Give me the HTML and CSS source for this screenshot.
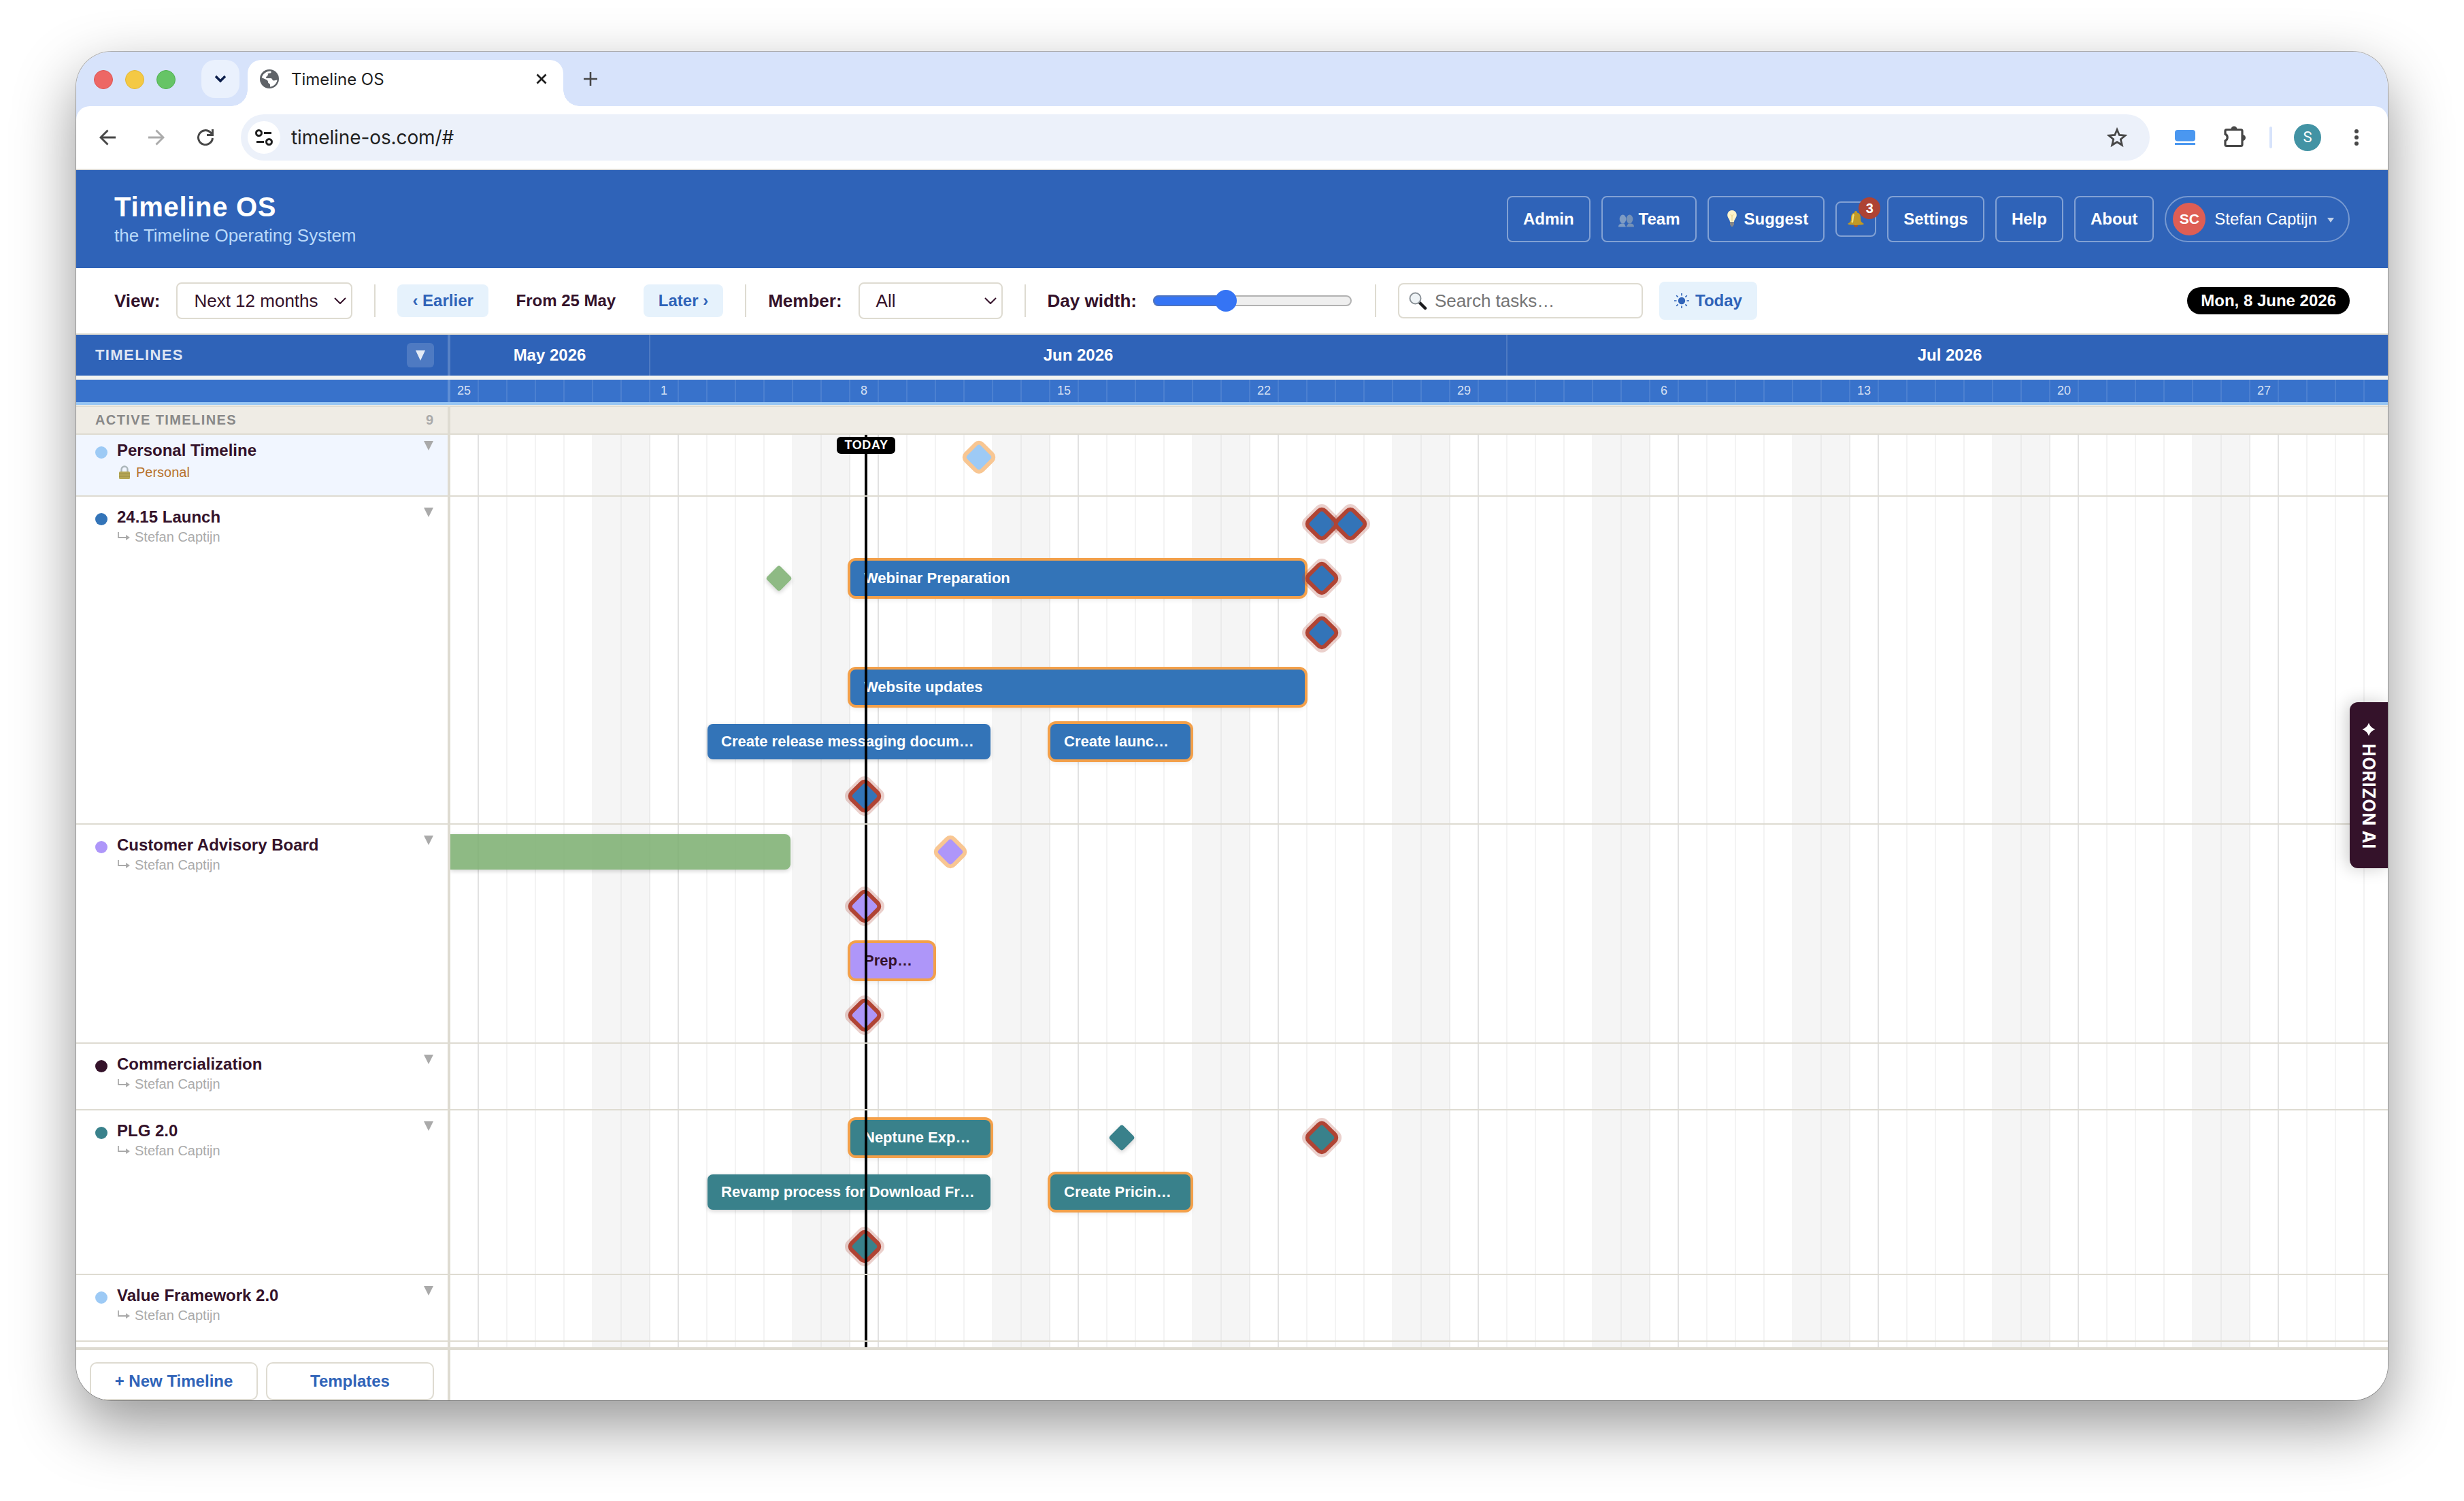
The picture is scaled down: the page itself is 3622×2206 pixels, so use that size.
FILE: index.html
```html
<!DOCTYPE html>
<html lang="en">
  <head>
    <meta charset="UTF-8" />
    <title>Timeline OS</title>
    <link rel="stylesheet" href="styles.css">
  </head>
  <body>
    <!-- Shared icons -->
    <svg width="0" height="0" class="defs">
      <symbol id="chevron" viewBox="0 0 18 10">
        <path d="M1 1l8 8 8-8" fill="none" stroke="currentColor" stroke-width="2" />
      </symbol>
      <symbol id="triangle" viewBox="0 0 14 14">
        <path d="M0 0h14L7 14z" fill="currentColor" />
      </symbol>
      <symbol id="owner" viewBox="0 0 18 14">
        <path d="M1 0v8h13" fill="none" stroke="currentColor" stroke-width="1.8" />
        <path d="M12 4l6 4-6 4z" fill="currentColor" />
      </symbol>
    </svg>

    <div class="window">
      <div class="tabstrip">
        <div class="lights">
          <span class="light red"></span>
          <span class="light yellow"></span>
          <span class="light green"></span>
        </div>
        <div class="tab-search">
          <svg width="18" height="12" viewBox="0 0 18 12"><path d="M2 2l7 7 7-7" fill="none" stroke="#0b1d4a" stroke-width="3.4" /></svg>
        </div>
        <div class="tab">
          <svg width="28" height="28" viewBox="0 0 28 28">
            <circle cx="14" cy="14" r="14" fill="#5f6368" />
            <path d="M16 2.500c2 2-1 4-3 4.500-2 .6-1 3-3 3.500-2 .4-1 2.500 1 2.500h5c2.500 0 2 3.500 4.500 3.500 2 0 3-1 5-1-.5 5-5 9.500-10.500 10v-3c0-2-3-1.500-3-4 0-3-3-3.500-5-4.500L2.800 12C4 7 9 2.600 16 2.500z" fill="#fff" />
            <path d="M12 7.500c2-2 5-1 6 1s-2 3-4 3.500" fill="none" stroke="#5f6368" stroke-width="2" />
          </svg>
          <span class="tab-title">Timeline OS</span>
          <svg width="16" height="16" viewBox="0 0 16 16"><path d="M1.500 1.500l13 13M14.500 1.500l-13 13" stroke="#1f1f1f" stroke-width="2.8" /></svg>
        </div>
        <svg class="new-tab" width="20" height="20" viewBox="0 0 20 20"><path d="M10 0v20M0 10h20" stroke="#474747" stroke-width="2.6" /></svg>
      </div>

      <div class="urlbar">
        <div class="nav-icons">
          <svg width="24" height="24" viewBox="0 0 24 24" stroke="#474747"><path d="M24 12H2M12.500 1.500L2 12l10.500 10.500" fill="none" stroke-width="3" /></svg>
          <svg width="24" height="24" viewBox="0 0 24 24" stroke="#ababab"><path d="M0 12h22M11.500 1.500L22 12 11.500 22.500" fill="none" stroke-width="3" /></svg>
          <svg width="24" height="24" viewBox="0 0 24 24" stroke="#474747"><path d="M22.500 13A10.500 10.500 0 1 1 19.500 4.700L22 7.500M22.500 0v8.500H14" fill="none" stroke-width="3" /></svg>
        </div>
        <div class="omnibox">
          <div class="site-info">
            <svg width="26" height="24" viewBox="0 0 26 24" fill="none" stroke="#1f1f1f" stroke-width="3">
              <circle cx="5.500" cy="5.500" r="4" /><path d="M13 5.500h11M2 18.500h11" /><circle cx="20.500" cy="18.500" r="4" />
            </svg>
          </div>
          <span class="url">timeline-os.com/#</span>
          <svg class="star" width="30" height="30" viewBox="0 0 30 30"><path d="M15 3.500l3.300 8 8.600.7-6.600 5.600 2 8.400-7.300-4.500-7.300 4.500 2-8.400-6.600-5.600 8.600-.7z" fill="none" stroke="#474747" stroke-width="2.800" /></svg>
        </div>
        <svg class="ext" width="30" height="24" viewBox="0 0 30 24" fill="#4a97f0"><rect y="1" width="30" height="16.500" rx="4" /><rect y="20" width="30" height="3" /></svg>
        <svg class="puzzle" width="34" height="34" viewBox="0 0 34 34">
          <path d="M5 6.500h20q2 0 2 2v20q0 2-2 2H4q-2 0-2-2V23a5.500 5.500 0 0 0 0-10V8.500q0-2 2-2z" fill="none" stroke="#474747" stroke-width="3.200" />
          <path d="M10.500 6a4.500 4.500 0 0 1 9 0zM27.500 14a4.500 4.500 0 0 1 0 9z" fill="#474747" />
        </svg>
        <span class="bar-divider"></span>
        <span class="profile">S</span>
        <svg width="6" height="26" viewBox="0 0 6 26" fill="#474747"><circle cx="3" cy="4" r="3" /><circle cx="3" cy="13" r="3" /><circle cx="3" cy="22" r="3" /></svg>
      </div>

      <header class="app-header">
        <div class="brand">
          <h1>Timeline OS</h1>
          <p>the Timeline Operating System</p>
        </div>
        <nav class="header-nav">
          <a class="btn-header">Admin</a>
          <a class="btn-header">
            <svg class="icon-team" width="23" height="19" viewBox="0 0 23 19">
              <g fill="#7e9cc4"><ellipse cx="6.500" cy="7" rx="4.800" ry="6.500" /><path d="M0 18.500c0-4 3-4.500 4.500-5h4l2.500 5z" /></g>
              <g fill="#7592b8"><ellipse cx="16.500" cy="7" rx="4.800" ry="6.500" /><path d="M11.500 18.500l3-5h4c2 .5 4.500 1 4.500 5z" /></g>
            </svg>
            Team
          </a>
          <a class="btn-header">
            <svg class="icon-bulb" width="14" height="24" viewBox="0 0 14 24">
              <path d="M7 0a6.800 6.800 0 0 1 6.800 7c0 4-3.300 6-3.800 10H4C3.500 13 .2 11 .2 7A6.800 6.800 0 0 1 7 0z" fill="#fdf3cb" />
              <path d="M5 6l2 3 2-3M7 9v7" stroke="#e5cf83" fill="none" /><path d="M4 17h6v4l-2 3H6l-2-3z" fill="#84868a" />
            </svg>
            Suggest
          </a>
          <a class="btn-bell">
            <svg width="24" height="24" viewBox="0 0 24 24">
              <circle cx="12" cy="21" r="3" fill="#a3562b" />
              <path d="M12 0c1.500 0 2 1 2 2.500 4 1 5 4 5 8 0 5 1 6 5 8.500-1 2.500-23 2.500-24 0 4-2.500 5-3.500 5-8.500 0-4 1-7 5-8C10 1 10.500 0 12 0z" fill="#c29a25" />
              <path d="M9 5c-2 3-1 8-2.500 12" stroke="#f3df79" stroke-width="2.500" fill="none" />
            </svg>
            <span class="badge">3</span>
          </a>
          <a class="btn-header">Settings</a>
          <a class="btn-header">Help</a>
          <a class="btn-header">About</a>
          <a class="btn-user">
            <span class="avatar">SC</span>
            Stefan Captijn
            <svg class="user-caret" width="10" height="7" viewBox="0 0 14 14" preserveAspectRatio="none"><use href="#triangle" /></svg>
          </a>
        </nav>
      </header>

      <div class="toolbar">
        <label>View:</label>
        <div class="select select-view">Next 12 months <svg width="18" height="10"><use href="#chevron" /></svg></div>
        <span class="divider"></span>
        <button class="btn-soft">‹ Earlier</button>
        <span class="range-label">From 25 May</span>
        <button class="btn-soft">Later ›</button>
        <span class="divider"></span>
        <label>Member:</label>
        <div class="select select-member">All <svg width="18" height="10"><use href="#chevron" /></svg></div>
        <span class="divider"></span>
        <label>Day width:</label>
        <div class="slider"><span class="slider-fill"></span><span class="slider-thumb"></span></div>
        <span class="divider"></span>
        <div class="search">
          <svg width="27" height="27" viewBox="0 0 27 27">
            <path d="M16 16l8 8" stroke="#1c1c1e" stroke-width="4.500" stroke-linecap="round" />
            <circle cx="9.500" cy="9.500" r="8" fill="#eef3f6" stroke="#8b9298" stroke-width="2" />
          </svg>
          Search tasks…
        </div>
        <button class="btn-soft btn-today">
          <svg width="22" height="22" viewBox="0 0 22 22"><circle cx="11" cy="11" r="5.200" fill="#2f63b8" /><path d="M11 0v3.500M11 18.500V22M0 11h3.500M18.500 11H22M3.200 3.200l2.400 2.400M16.400 16.400l2.400 2.400M3.200 18.800l2.400-2.400M16.400 5.600l2.400-2.400" stroke="#2f63b8" stroke-width="1.600" /></svg>
          Today
        </button>
        <span class="date-pill">Mon, 8 June 2026</span>
      </div>

      <div class="months">
        <div class="side-head">
          <span>TIMELINES</span>
          <span class="toggle-all"><svg width="14" height="15" viewBox="0 0 14 14" preserveAspectRatio="none"><use href="#triangle" /></svg></span>
        </div>
        <div class="month" style="width: 294px">May 2026</div>
        <div class="month" style="width: 1260px">Jun 2026</div>
        <div class="month" style="width: 1302px">Jul 2026</div>
      </div>

      <div class="days">
        <div class="side-days"></div>
        <div class="week"><span>25</span></div>
        <div class="week"><span>1</span></div>
        <div class="week"><span>8</span></div>
        <div class="week"><span>15</span></div>
        <div class="week"><span>22</span></div>
        <div class="week"><span>29</span></div>
        <div class="week"><span>6</span></div>
        <div class="week"><span>13</span></div>
        <div class="week"><span>20</span></div>
        <div class="week"><span>27</span></div>
      </div>

      <div class="section">
        <div class="section-side"><span>ACTIVE TIMELINES</span><span class="count">9</span></div>
      </div>

      <div class="rows">
        <div class="row">
          <div class="row-side personal">
            <span class="dot sky"></span>
            <div class="row-text">
              <div class="row-name">Personal Timeline</div>
              <div class="row-sub">
                <svg width="18" height="20" viewBox="0 0 18 20"><path d="M4.500 10V6a4.500 4.500 0 0 1 9 0v4" fill="none" stroke="#a9b4b8" stroke-width="2.400" /><rect x="1" y="9" width="16" height="11" rx="1.500" fill="#b5a655" /><path d="M1 12.500h16M1 16h16" stroke="#978a45" /></svg>
                Personal
              </div>
            </div>
            <svg class="caret" width="14" height="14"><use href="#triangle" /></svg>
          </div>
          <div class="lanes">
            <div class="lane"><span class="milestone sky soon" style="grid-column: 19"></span></div>
            <span class="today-line"></span>
            <span class="today-tag">TODAY</span>
          </div>
        </div>

        <div class="row">
          <div class="row-side">
            <span class="dot blue"></span>
            <div class="row-text">
              <div class="row-name">24.15 Launch</div>
              <div class="row-sub"><svg width="18" height="14"><use href="#owner" /></svg> Stefan Captijn</div>
            </div>
            <svg class="caret" width="14" height="14"><use href="#triangle" /></svg>
          </div>
          <div class="lanes">
            <div class="lane">
              <span class="milestone blue late" style="grid-column: 31"></span>
              <span class="milestone blue late" style="grid-column: 32"></span>
            </div>
            <div class="lane">
              <span class="milestone done" style="grid-column: 12"></span>
              <span class="bar blue due" style="grid-column: 15 / span 16">Webinar Preparation</span>
              <span class="milestone blue late" style="grid-column: 31"></span>
            </div>
            <div class="lane"><span class="milestone blue late" style="grid-column: 31"></span></div>
            <div class="lane"><span class="bar blue due" style="grid-column: 15 / span 16">Website updates</span></div>
            <div class="lane">
              <span class="bar blue" style="grid-column: 10 / span 10">Create release messaging docum…</span>
              <span class="bar blue due" style="grid-column: 22 / span 5">Create launc…</span>
            </div>
            <div class="lane"><span class="milestone blue late" style="grid-column: 15"></span></div>
            <span class="today-line"></span>
          </div>
        </div>

        <div class="row">
          <div class="row-side">
            <span class="dot violet"></span>
            <div class="row-text">
              <div class="row-name">Customer Advisory Board</div>
              <div class="row-sub"><svg width="18" height="14"><use href="#owner" /></svg> Stefan Captijn</div>
            </div>
            <svg class="caret" width="14" height="14"><use href="#triangle" /></svg>
          </div>
          <div class="lanes">
            <div class="lane">
              <span class="bar done cut" style="grid-column: 1 / span 12"></span>
              <span class="milestone violet soon" style="grid-column: 18"></span>
            </div>
            <div class="lane"><span class="milestone violet late" style="grid-column: 15"></span></div>
            <div class="lane"><span class="bar violet due" style="grid-column: 15 / span 3">Prep…</span></div>
            <div class="lane"><span class="milestone violet late" style="grid-column: 15"></span></div>
            <span class="today-line"></span>
          </div>
        </div>

        <div class="row">
          <div class="row-side">
            <span class="dot plum"></span>
            <div class="row-text">
              <div class="row-name">Commercialization</div>
              <div class="row-sub"><svg width="18" height="14"><use href="#owner" /></svg> Stefan Captijn</div>
            </div>
            <svg class="caret" width="14" height="14"><use href="#triangle" /></svg>
          </div>
          <div class="lanes"><span class="today-line"></span></div>
        </div>

        <div class="row">
          <div class="row-side">
            <span class="dot teal"></span>
            <div class="row-text">
              <div class="row-name">PLG 2.0</div>
              <div class="row-sub"><svg width="18" height="14"><use href="#owner" /></svg> Stefan Captijn</div>
            </div>
            <svg class="caret" width="14" height="14"><use href="#triangle" /></svg>
          </div>
          <div class="lanes">
            <div class="lane">
              <span class="bar teal due" style="grid-column: 15 / span 5">Neptune Exp…</span>
              <span class="milestone teal" style="grid-column: 24"></span>
              <span class="milestone teal late" style="grid-column: 31"></span>
            </div>
            <div class="lane">
              <span class="bar teal" style="grid-column: 10 / span 10">Revamp process for Download Fr…</span>
              <span class="bar teal due" style="grid-column: 22 / span 5">Create Pricin…</span>
            </div>
            <div class="lane"><span class="milestone teal late" style="grid-column: 15"></span></div>
            <span class="today-line"></span>
          </div>
        </div>

        <div class="row">
          <div class="row-side">
            <span class="dot sky"></span>
            <div class="row-text">
              <div class="row-name">Value Framework 2.0</div>
              <div class="row-sub"><svg width="18" height="14"><use href="#owner" /></svg> Stefan Captijn</div>
            </div>
            <svg class="caret" width="14" height="14"><use href="#triangle" /></svg>
          </div>
          <div class="lanes"><span class="today-line"></span></div>
        </div>

        <!-- next row, cut off by the footer -->
        <div class="row">
          <div class="row-side"></div>
          <div class="lanes"><span class="today-line"></span></div>
        </div>
      </div>

      <footer class="app-footer">
        <div class="footer-side">
          <button class="btn-footer">+ New Timeline</button>
          <button class="btn-footer">Templates</button>
        </div>
      </footer>

      <div class="horizon">
        <svg width="20" height="20" viewBox="0 0 20 20"><path d="M10 0.500Q12.500 7.500 19.500 10 12.500 12.500 10 19.500 7.500 12.500 0.500 10 7.500 7.500 10 0.500z" fill="#fff" /></svg>
        <span>HORIZON AI</span>
      </div>
    </div>
  </body>
</html>
```
FILE: styles.css
```css
* {
  box-sizing: border-box;
}

body {
  margin: 0;
  min-height: 2206px;
  padding: 76px 112px;
  background: #fff;
  font-family: "Liberation Sans", Arial, sans-serif;
  color: #34122a;
}

svg {
  display: block;
  flex: none;
}

.defs {
  position: absolute;
}

button {
  font-family: inherit;
  border: none;
}

.window {
  position: relative;
  display: flex;
  flex-direction: column;
  width: 3398px;
  height: 1982px;
  border-radius: 52px;
  overflow: hidden;
  background: #fff;
  box-shadow: 0 0 0 1px rgba(0, 0, 0, 0.28), 0 36px 90px rgba(0, 0, 0, 0.42);
}

/* Browser chrome */
.tabstrip {
  display: flex;
  align-items: center;
  height: 100px;
  margin-bottom: -20px;
  padding: 0 0 18px 26px;
  background: #d7e3fb;
  flex: none;
}

.lights {
  display: flex;
  gap: 18px;
}

.light {
  width: 28px;
  height: 28px;
  border-radius: 50%;
}

.light.red {
  background: #ed6765;
  border: 1px solid #dd5452;
}

.light.yellow {
  background: #f4c944;
  border: 1px solid #e3b632;
}

.light.green {
  background: #66c466;
  border: 1px solid #4fb150;
}

.tab-search {
  display: flex;
  align-items: center;
  justify-content: center;
  width: 56px;
  height: 56px;
  margin: 0 0 2px 38px;
  border-radius: 20px;
  background: #eaf1fd;
}

.tab {
  position: relative;
  display: flex;
  align-items: center;
  align-self: flex-end;
  width: 464px;
  height: 70px;
  margin-left: 12px;
  padding: 0 24px 14px 18px;
  border-radius: 20px 20px 0 0;
  background: #fff;
  font-family: Inter, sans-serif;
  font-size: 24px;
  color: #1f1f1f;
}

/* flared tab feet */
.tab::before,
.tab::after {
  content: "";
  position: absolute;
  bottom: 2px;
  width: 24px;
  height: 24px;
}

.tab::before {
  left: -24px;
  background: radial-gradient(circle at 0 0, transparent 23.5px, #fff 24px);
}

.tab::after {
  right: -24px;
  background: radial-gradient(circle at 100% 0, transparent 23.5px, #fff 24px);
}

.tab-title {
  flex: 1;
  margin-left: 18px;
}

.new-tab {
  margin: 0 0 2px 30px;
}

.urlbar {
  position: relative;
  display: flex;
  align-items: center;
  height: 94px;
  padding: 0 43px 0 34px;
  border-radius: 20px 20px 0 0;
  border-bottom: 2px solid #dcdcda;
  background: #fff;
  flex: none;
}

.nav-icons {
  display: flex;
  gap: 48px;
}

.omnibox {
  display: flex;
  align-items: center;
  width: 2806px;
  height: 68px;
  margin-left: 40px;
  padding: 0 33px 0 10px;
  border-radius: 34px;
  background: #ecf1fa;
}

.site-info {
  display: flex;
  align-items: center;
  justify-content: center;
  width: 48px;
  height: 48px;
  border-radius: 50%;
  background: #fff;
}

.url {
  flex: 1;
  margin-left: 16px;
  font-family: Inter, sans-serif;
  font-size: 28px;
  letter-spacing: -0.1px;
  color: #1f1f1f;
}

.ext {
  margin-left: 37px;
}

.puzzle {
  margin: 0 0 3px 42px;
}

.bar-divider {
  width: 4px;
  height: 32px;
  margin-left: 33px;
  border-radius: 2px;
  background: #d7e3fb;
}

.profile {
  width: 40px;
  height: 40px;
  margin: 0 49px 0 32px;
  border-radius: 50%;
  background: #4293a4;
  color: #fff;
  font-family: Roboto, sans-serif;
  font-size: 22px;
  line-height: 40px;
  text-align: center;
}

/* App header */
.app-header {
  display: flex;
  align-items: center;
  justify-content: space-between;
  height: 144px;
  padding: 0 56px;
  background: #2f63b8;
  color: #fff;
  flex: none;
}

.brand h1 {
  margin: 0;
  font-size: 40px;
  line-height: 46px;
  letter-spacing: 0.7px;
}

.brand p {
  margin: 3px 0 0;
  font-size: 26px;
  line-height: 33px;
  color: #b9d9f9;
}

.header-nav {
  display: flex;
  align-items: center;
  gap: 16px;
}

.btn-header {
  display: flex;
  align-items: center;
  height: 68px;
  padding: 0 22px;
  border: 2px solid rgba(255, 255, 255, 0.4);
  border-radius: 8px;
  font-size: 24px;
  font-weight: bold;
}

.icon-team {
  margin: 4px 7px 0 1px;
}

.icon-bulb {
  margin: 0 11px 2px 5px;
}

.btn-bell {
  position: relative;
  display: flex;
  align-items: center;
  justify-content: center;
  width: 60px;
  height: 52px;
  border: 2px solid rgba(255, 255, 255, 0.4);
  border-radius: 8px;
}

.badge {
  position: absolute;
  top: -8px;
  right: -8px;
  width: 32px;
  height: 32px;
  border-radius: 50%;
  background: #ae4334;
  font-size: 20px;
  font-weight: bold;
  line-height: 32px;
  text-align: center;
}

.btn-user {
  display: flex;
  align-items: center;
  height: 68px;
  padding: 0 21px 0 10px;
  border: 2px solid rgba(255, 255, 255, 0.35);
  border-radius: 34px;
  font-size: 24px;
}

.avatar {
  width: 48px;
  height: 48px;
  margin-right: 13px;
  border-radius: 50%;
  background: #de5e54;
  font-size: 21px;
  font-weight: bold;
  line-height: 48px;
  text-align: center;
}

.user-caret {
  margin: 2px 0 0 15px;
  opacity: 0.7;
}

/* Toolbar */
.toolbar {
  display: flex;
  align-items: center;
  gap: 24px;
  height: 98px;
  padding: 0 56px;
  border-bottom: 2px solid #dedbd1;
  font-size: 26px;
  white-space: nowrap;
  flex: none;
}

.toolbar label {
  font-weight: bold;
}

.select {
  display: flex;
  align-items: center;
  justify-content: space-between;
  height: 54px;
  padding: 0 7px 0 24px;
  border: 2px solid #dedbd1;
  border-radius: 8px;
}

.select-view {
  width: 259px;
}

.select-member {
  width: 212px;
}

.divider {
  width: 2px;
  height: 48px;
  margin: 0 8px;
  background: #dedbd1;
}

.btn-soft {
  display: flex;
  align-items: center;
  height: 48px;
  padding: 0 22px;
  border-radius: 8px;
  background: #e6f2fc;
  color: #2f63b8;
  font-size: 24px;
  font-weight: bold;
}

.range-label {
  width: 180px;
  font-size: 24px;
  font-weight: bold;
  text-align: center;
}

.slider {
  display: flex;
  align-items: center;
  width: 292px;
  height: 16px;
  margin-right: 2px;
  border: 2px solid #b2b2b2;
  border-radius: 8px;
  background: #efefef;
}

.slider-fill {
  width: 103px;
  height: 16px;
  margin-left: -2px;
  border: 2px solid #4f74bf;
  border-right: none;
  border-radius: 8px 0 0 8px;
  background: #3574f4;
}

.slider-thumb {
  width: 32px;
  height: 32px;
  margin-left: -12px;
  border-radius: 50%;
  background: #3574f4;
}

.search {
  display: flex;
  align-items: center;
  gap: 11px;
  width: 360px;
  height: 52px;
  padding-left: 14px;
  border: 2px solid #dedbd1;
  border-radius: 8px;
  color: #757575;
}

.btn-today {
  height: 56px;
  gap: 9px;
}

.date-pill {
  height: 40px;
  margin-left: auto;
  padding: 0 20px;
  border-radius: 20px;
  background: #000;
  color: #fff;
  font-size: 24px;
  font-weight: bold;
  line-height: 40px;
}

/* Timeline header */
.months {
  display: flex;
  height: 60px;
  background: #2f63b8;
  color: #fff;
  flex: none;
}

.side-head {
  display: flex;
  align-items: center;
  justify-content: space-between;
  width: 550px;
  padding: 0 20px 0 28px;
  border-right: 4px solid rgba(255, 255, 255, 0.2);
  color: rgba(255, 255, 255, 0.85);
  font-size: 22px;
  font-weight: bold;
  letter-spacing: 1.4px;
  flex: none;
}

.toggle-all {
  display: flex;
  align-items: center;
  justify-content: center;
  width: 40px;
  height: 36px;
  border-radius: 6px;
  background: rgba(255, 255, 255, 0.15);
}

.month {
  border-right: 2px solid rgba(255, 255, 255, 0.15);
  font-size: 24px;
  font-weight: bold;
  line-height: 60px;
  text-align: center;
  flex: none;
}

.days {
  display: flex;
  height: 44px;
  border-top: 6px solid #f4f4f0;
  border-bottom: 1px solid #f4f4f0;
  background: #3872cb;
  flex: none;
  overflow: hidden;
  box-shadow: inset 0 -4px #97c5f3;
}

.side-days {
  width: 550px;
  height: 33px;
  border-right: 4px solid rgba(255, 255, 255, 0.2);
  flex: none;
}

.week {
  width: 294px;
  height: 33px;
  background: repeating-linear-gradient(to right, transparent 0 40px, rgba(255, 255, 255, 0.1) 40px 42px);
  flex: none;
}

.week span {
  display: block;
  width: 40px;
  color: rgba(255, 255, 255, 0.8);
  font-size: 18px;
  line-height: 33px;
  text-align: center;
}

.section {
  position: relative;
  z-index: 3;
  height: 43px;
  /* first row is scrolled slightly under this label */
  margin-bottom: -7px;
  border-top: 2px solid #dedbd1;
  border-bottom: 2px solid #dedbd1;
  background: #efece5;
  flex: none;
}

.section-side {
  display: flex;
  align-items: center;
  justify-content: space-between;
  width: 550px;
  height: 39px;
  padding: 0 21px 0 28px;
  border-right: 4px solid #dedbd1;
  color: #888;
  font-size: 20px;
  font-weight: bold;
  letter-spacing: 1.4px;
}

.count {
  color: #aaa;
  letter-spacing: 0;
}

/* Rows */
.rows {
  flex: 1;
  min-height: 0;
  overflow: hidden;
}

.row {
  display: flex;
  min-height: 98px;
  border-bottom: 2px solid #dedbd1;
}

.row-side {
  display: flex;
  width: 550px;
  padding: 16px 21px 0 28px;
  border-right: 4px solid #dedbd1;
  flex: none;
}

.row-side.personal {
  background: #f1f6ff;
}

.dot {
  width: 18px;
  height: 18px;
  margin: 8px 14px 0 0;
  border-radius: 50%;
}

.row-text {
  flex: 1;
}

.row-name {
  margin-top: -1px;
  font-size: 24px;
  font-weight: bold;
  line-height: 30px;
}

.row-sub {
  display: flex;
  align-items: center;
  gap: 7px;
  margin-top: 2px;
  padding-left: 1px;
  color: #aaa;
  font-size: 20px;
  line-height: 24px;
}

.personal .row-sub {
  gap: 8px;
  margin-top: 5px;
  padding-left: 2px;
  color: #b8722c;
}

.caret {
  color: #aaa;
}

.lanes {
  position: relative;
  flex: 1;
  min-width: 0;
  overflow: hidden;
  background: repeating-linear-gradient(
    to right,
    #fff 0 40px,
    #e2e2e2 40px 42px,
    #fff 42px 82px,
    #f3f3f3 82px 84px,
    #fff 84px 124px,
    #f3f3f3 124px 126px,
    #fff 126px 166px,
    #f3f3f3 166px 168px,
    #fff 168px 208px,
    #f5f5f5 208px 250px,
    #ebebeb 250px 252px,
    #f5f5f5 252px 292px,
    #ebebeb 292px 294px
  );
}

.lane {
  display: grid;
  grid-template-columns: repeat(68, 42px);
  grid-template-rows: 80px;
  align-items: center;
  height: 80px;
}

.bar {
  grid-row: 1;
  height: 52px;
  margin-right: 4px;
  padding: 0 20px;
  border-radius: 8px;
  box-shadow: 0 2px 6px rgba(0, 0, 0, 0.18);
  color: #fff;
  font-size: 22px;
  font-weight: bold;
  line-height: 52px;
  white-space: nowrap;
}

.bar.due {
  box-shadow: 0 0 0 4px #f3a04a, 0 4px 8px rgba(0, 0, 0, 0.12);
}

.bar.cut {
  border-radius: 0 8px 8px 0;
}

.milestone {
  grid-row: 1;
  justify-self: center;
  width: 28px;
  height: 28px;
  border-radius: 4px;
  transform: rotate(45deg);
  box-shadow: 2px 2px 6px rgba(0, 0, 0, 0.18);
}

.milestone.soon {
  box-shadow: 0 0 0 6px #f8c692;
}

.milestone.late {
  box-shadow: 0 0 0 6px #b04434, 0 0 0 10px rgba(176, 68, 52, 0.25);
}

.sky {
  background: #9dcaf5;
}

.blue {
  background: #3374b8;
}

.violet {
  background: #ae96f9;
}

.bar.violet {
  color: #34122a;
}

.plum {
  background: #34122a;
}

.teal {
  background: #39818b;
}

.done {
  background: rgba(122, 174, 110, 0.85);
}

.today-line {
  position: absolute;
  top: 0;
  bottom: 0;
  left: 609px;
  width: 4px;
  background: #000;
}

.today-tag {
  position: absolute;
  top: 10px;
  left: 568px;
  width: 86px;
  height: 25px;
  padding-left: 1px;
  border-radius: 6px;
  background: #000;
  color: #fff;
  font-size: 18px;
  font-weight: bold;
  letter-spacing: 0.6px;
  line-height: 25px;
  text-align: center;
}

/* Footer */
.app-footer {
  height: 78px;
  border-top: 4px solid #dedbd1;
  background: #fff;
  flex: none;
}

.footer-side {
  display: flex;
  gap: 12px;
  width: 550px;
  height: 74px;
  padding: 18px 20px 0;
  border-right: 4px solid #dedbd1;
}

.btn-footer {
  flex: 1;
  height: 56px;
  padding: 0;
  border: 2px solid #dedbd1;
  border-radius: 10px;
  background: #fff;
  color: #2f63b8;
  font-size: 24px;
  font-weight: bold;
}

.horizon {
  position: absolute;
  right: 0;
  top: 956px;
  z-index: 4;
  display: flex;
  flex-direction: column;
  align-items: center;
  width: 56px;
  height: 244px;
  padding-top: 30px;
  border-radius: 12px 0 0 12px;
  background: #34122a;
  box-shadow: -4px 0 24px rgba(0, 0, 0, 0.2);
  color: #fff;
}

.horizon span {
  margin-top: 11px;
  font-family: Inter, sans-serif;
  font-size: 25px;
  font-weight: bold;
  letter-spacing: 0.8px;
  line-height: 30px;
  writing-mode: vertical-rl;
}
```
